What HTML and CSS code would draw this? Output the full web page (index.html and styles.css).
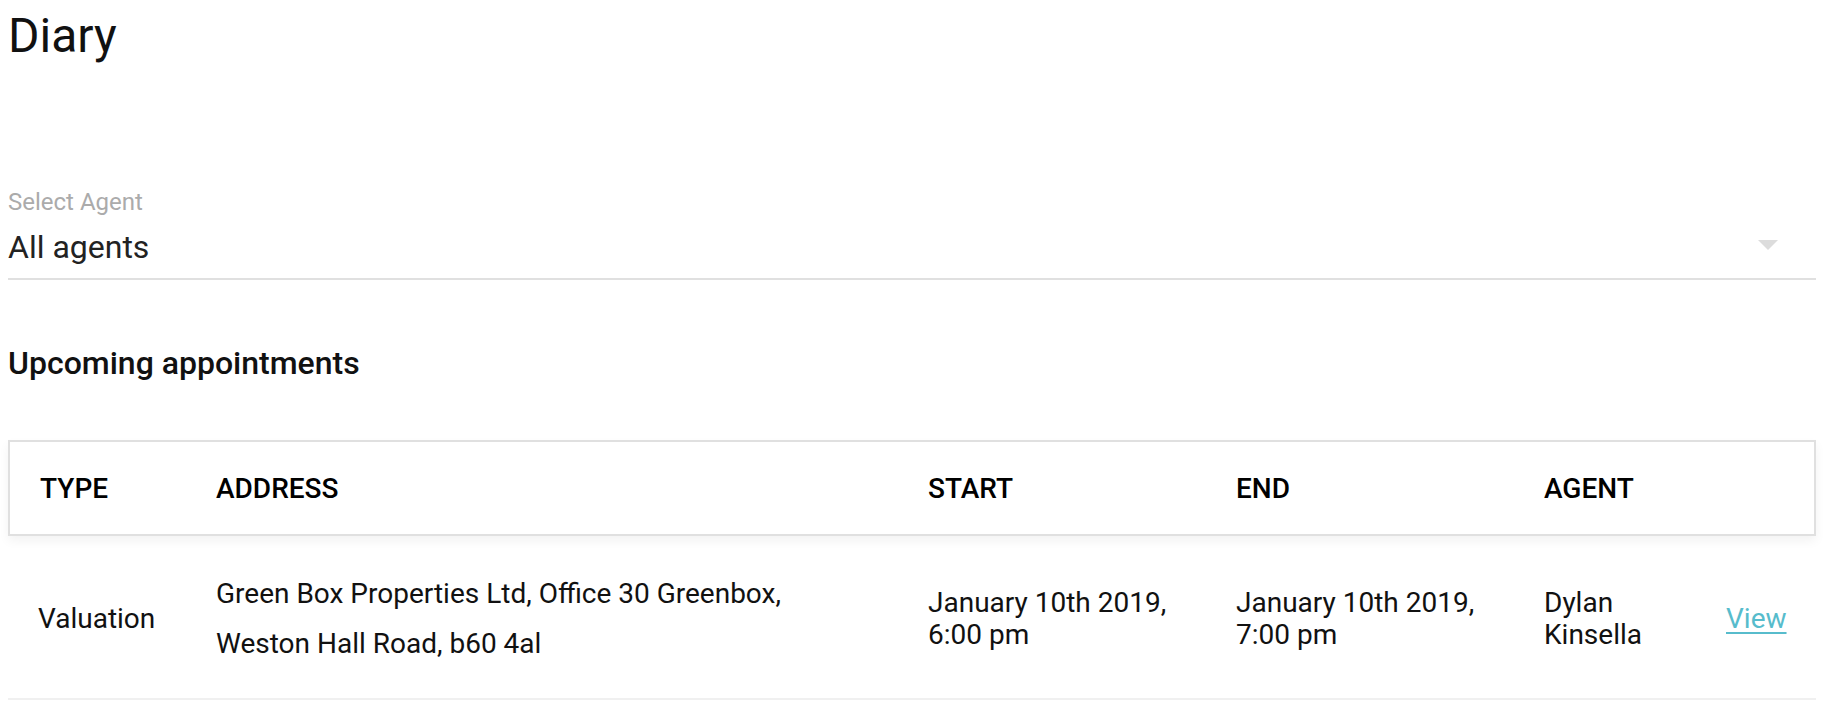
FILE: index.html
```html
<!DOCTYPE html>
<html lang="en">
<head>
<meta charset="utf-8">
<title>Diary</title>
<link rel="stylesheet" href="styles.css">
</head>
<body>
<main class="page">
  <h1 class="title">Diary</h1>

  <div class="select-field">
    <div class="select-label">Select Agent</div>
    <div class="select-value">
      <span>All agents</span>
      <span class="select-arrow"></span>
    </div>
  </div>

  <h2 class="section-title">Upcoming appointments</h2>

  <div class="appt-table">
    <div class="appt-head">
      <div class="cell">TYPE</div>
      <div class="cell">ADDRESS</div>
      <div class="cell">START</div>
      <div class="cell">END</div>
      <div class="cell">AGENT</div>
      <div class="cell"></div>
    </div>
    <div class="appt-row">
      <div class="cell">Valuation</div>
      <div class="cell address">Green Box Properties Ltd, Office 30 Greenbox,<br>Weston Hall Road, b60 4al</div>
      <div class="cell">January 10th 2019,<br>6:00 pm</div>
      <div class="cell">January 10th 2019,<br>7:00 pm</div>
      <div class="cell">Dylan<br>Kinsella</div>
      <div class="cell"><a class="view-link" href="#">View</a></div>
    </div>
  </div>
</main>
</body>
</html>
```

FILE: styles.css
```css
html, body {
  margin: 0;
  padding: 0;
  background: #ffffff;
}

body {
  font-family: Roboto, "Liberation Sans", Arial, sans-serif;
  color: #111111;
}

.page {
  padding: 8px 22px 0 8px;
}

.title {
  margin: 0;
  font-size: 48px;
  line-height: 56px;
  font-weight: 400;
  color: #111111;
}

.select-field {
  margin-top: 124px;
}

.select-label {
  font-size: 24px;
  line-height: 28px;
  color: #ababab;
}

.select-value {
  margin-top: 12px;
  display: flex;
  align-items: center;
  justify-content: space-between;
  font-size: 32px;
  line-height: 38px;
  color: #222222;
  padding-bottom: 12px;
  border-bottom: 2px solid #e0e0e0;
}

.select-arrow {
  width: 0;
  height: 0;
  border-left: 10px solid transparent;
  border-right: 10px solid transparent;
  border-top: 10px solid #dcdcdc;
  margin-right: 38px;
  margin-bottom: 4px;
}

.section-title {
  margin: 64px 0 0 0;
  font-size: 32px;
  line-height: 38px;
  font-weight: 500;
  color: #111111;
}

.appt-table {
  margin-top: 58px;
}

.appt-head {
  display: grid;
  grid-template-columns: 176px 712px 308px 308px 182px 1fr;
  border: 2px solid #e0e0e0;
  box-shadow: 0 5px 10px rgba(0, 0, 0, 0.05);
  font-size: 28px;
  line-height: 32px;
  font-weight: 500;
  color: #000000;
}

.appt-head .cell {
  padding: 31px 30px 29px;
}

.appt-row {
  display: grid;
  grid-template-columns: 178px 712px 308px 308px 182px 1fr;
  align-items: center;
  border-bottom: 2px solid #f0f0f0;
  font-size: 28px;
  line-height: 32px;
  color: #111111;
  min-height: 162px;
}

.appt-row .cell {
  padding: 4px 30px 0;
}

.appt-row .address {
  line-height: 50px;
}

.view-link {
  color: #57bccc;
  text-decoration: underline;
  text-underline-offset: 4px;
  text-decoration-thickness: 2px;
}
```
